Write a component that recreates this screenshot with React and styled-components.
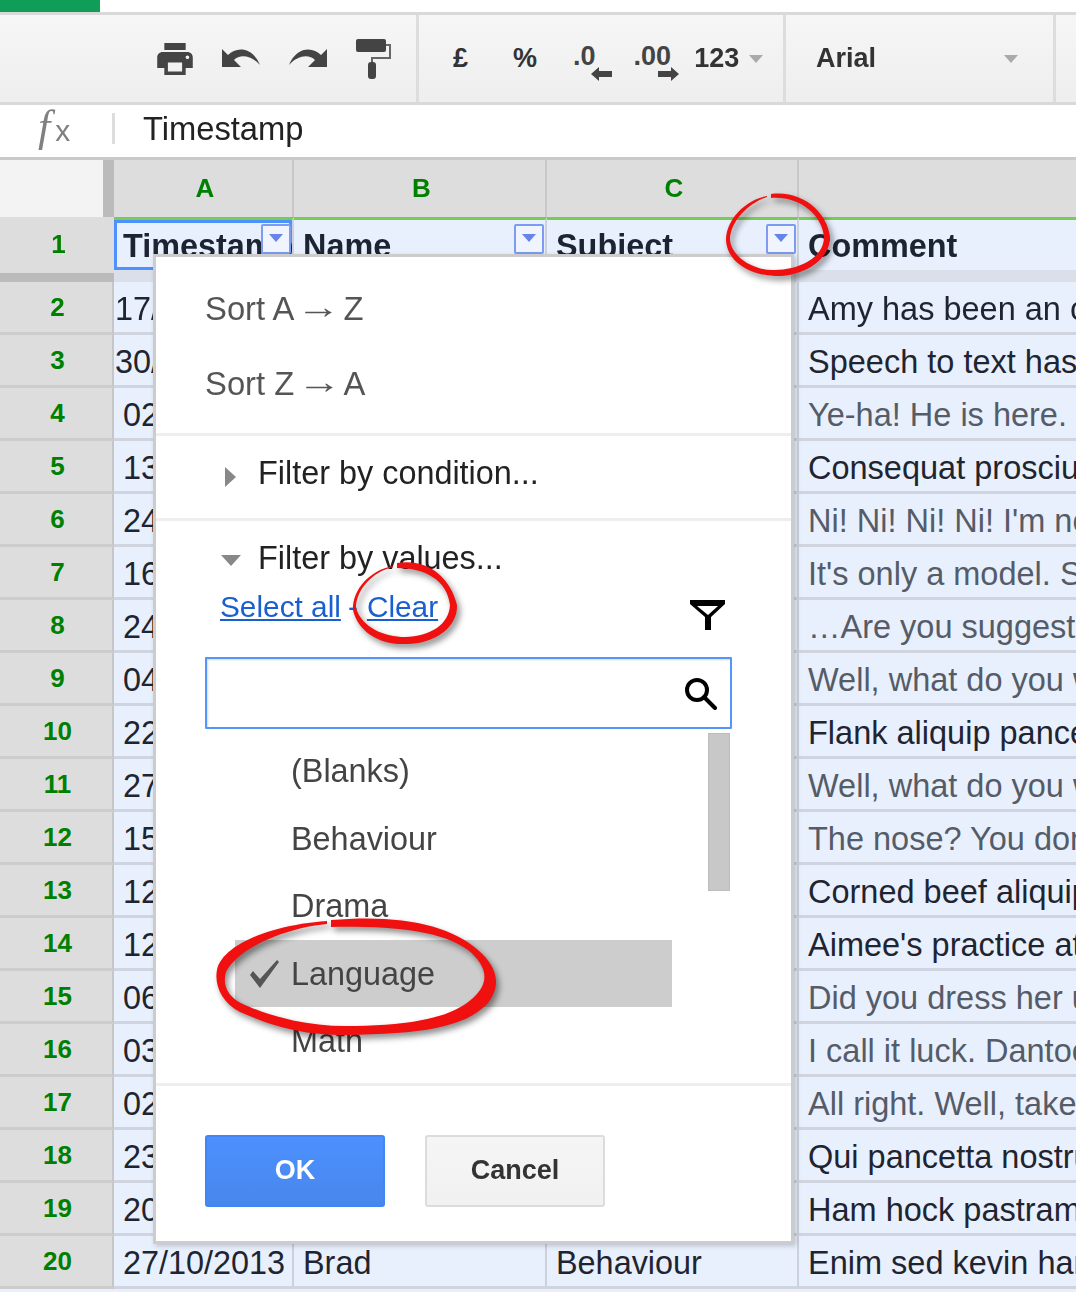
import styled, { createGlobalStyle } from "styled-components";

const rows = [
    { n: 2, date: "17/", inset: true, comment: "Amy has been an o" },
    { n: 3, date: "30/", inset: true, comment: "Speech to text has" },
    { n: 4, date: "02", comment: "Ye-ha! He is here.", muted: true },
    { n: 5, date: "13", comment: "Consequat prosciutto" },
    { n: 6, date: "24", comment: "Ni! Ni! Ni! Ni! I'm no", muted: true },
    { n: 7, date: "16", comment: "It's only a model. S", muted: true },
    { n: 8, date: "24", comment: "…Are you suggest", muted: true },
    { n: 9, date: "04", comment: "Well, what do you w", muted: true },
    { n: 10, date: "22", comment: "Flank aliquip pance" },
    { n: 11, date: "27", comment: "Well, what do you w", muted: true },
    { n: 12, date: "15", comment: "The nose? You don", muted: true },
    { n: 13, date: "12", comment: "Corned beef aliquip" },
    { n: 14, date: "12", comment: "Aimee's practice at" },
    { n: 15, date: "06", comment: "Did you dress her u", muted: true },
    { n: 16, date: "03", comment: "I call it luck. Dantoc", muted: true },
    { n: 17, date: "02", comment: "All right. Well, take", muted: true },
    { n: 18, date: "23", comment: "Qui pancetta nostru" },
    { n: 19, date: "20", comment: "Ham hock pastram" },
    { n: 20, date: "27/10/2013", name: "Brad", subject: "Behaviour", comment: "Enim sed kevin ham" },
];

const values = ["(Blanks)", "Behaviour", "Drama", "Language", "Math"];

export default function App() {
    return (
        <Page>
            <GlobalStyle />
            <TopStrip><Progress /></TopStrip>
            <Toolbar>
                <ToolGroup $width={416} $pad={157} $gap={29}>
                    <svg width="36" height="32" viewBox="2 3 20 18" fill="#444">
                        <path d="M19 8H5c-1.66 0-3 1.34-3 3v6h4v4h12v-4h4v-6c0-1.66-1.34-3-3-3zm-3 11H8v-5h8v5zm3-7c-.55 0-1-.45-1-1s.45-1 1-1 1 .45 1 1-.45 1-1 1zm-1-9H6v4h12V3z" />
                    </svg>
                    <ArrowIcon />
                    <ArrowIcon $flip />
                    <svg width="35" height="40" viewBox="0 0 35 40">
                        <rect width="30" height="13" rx="2" fill="#444" />
                        <path d="M30 6H34V19H16V25" fill="none" stroke="#666" strokeWidth="2" />
                        <rect x="12" y="23" width="8" height="17" rx="3" fill="#444" />
                    </svg>
                </ToolGroup>
                <ToolSep />
                <ToolGroup $width={364} $pad={34} $gap={0}>
                    <ToolText>£</ToolText>
                    <ToolText $left={45}>%</ToolText>
                    <Decimal $left={36} $shift={16}>
                        .0
                        <svg width="21" height="14" viewBox="0 0 21 14" fill="#444">
                            <path d="M0 7L8 0V4H21V10H8V14Z" />
                        </svg>
                    </Decimal>
                    <Decimal $left={38} $shift={8}>
                        .00
                        <svg width="21" height="14" viewBox="0 0 21 14" fill="#444">
                            <path d="M21 7L13 0V4H0V10H13V14Z" />
                        </svg>
                    </Decimal>
                    <ToolText $left={23}>123</ToolText>
                    <DropCaret $left={10} />
                </ToolGroup>
                <ToolSep />
                <ToolGroup $width={267} $pad={30} $gap={0}>
                    <ToolText>Arial</ToolText>
                    <DropCaret $left={128} />
                </ToolGroup>
                <ToolSep />
            </Toolbar>
            <FormulaBar>
                <Fx>f<small>x</small></Fx>
                <FormulaSep />
                Timestamp
            </FormulaBar>
            <ColumnHeads>
                <Corner />
                <ColumnHead>A</ColumnHead>
                <ColumnHead>B</ColumnHead>
                <ColumnHead>C</ColumnHead>
                <ColumnHead $last />
            </ColumnHeads>
            <FrozenRow>
                <FrozenNumber>1</FrozenNumber>
                <FrozenCell $selected>Timestamp<FilterButton /></FrozenCell>
                <FrozenCell>Name<FilterButton /></FrozenCell>
                <FrozenCell>Subject<FilterButton /></FrozenCell>
                <FrozenCell $last>Comment</FrozenCell>
            </FrozenRow>
            <SheetBody>
                {rows.map((r) => (
                    <Row key={r.n}>
                        <RowNumber>{r.n}</RowNumber>
                        <Cell $inset={r.inset}>{r.date}</Cell>
                        <Cell>{r.name}</Cell>
                        <Cell>{r.subject}</Cell>
                        <Cell $last $muted={r.muted}>{r.comment}</Cell>
                    </Row>
                ))}
            </SheetBody>

            <Popup>
                <SortSection>
                    <SortItem>Sort A <SortArrow>→</SortArrow> Z</SortItem>
                    <SortItem>Sort Z <SortArrow>→</SortArrow> A</SortItem>
                </SortSection>
                <ConditionRow>
                    <Caret />
                    Filter by condition...
                </ConditionRow>
                <ValuesSection>
                    <ValuesHead>
                        <Caret $open />
                        Filter by values...
                    </ValuesHead>
                    <ValuesBody>
                        <LinksRow>
                            <LinkText>Select all</LinkText>
                            <LinkDash>-</LinkDash>
                            <LinkText>Clear</LinkText>
                            <FunnelIcon width="35" height="30" viewBox="0 0 35 30">
                                <path fillRule="evenodd" d="M0 0H35V4L21 17V30H15V17L0 4ZM7 6H28L18 15Z" />
                            </FunnelIcon>
                        </LinksRow>
                        <SearchBox>
                            <svg width="33" height="33" viewBox="0 0 33 33" fill="none" stroke="#000" strokeWidth="4">
                                <circle cx="13" cy="13" r="10" />
                                <path d="M20 20L31 31" strokeLinecap="round" />
                            </svg>
                        </SearchBox>
                        <ListArea>
                            <ValueList>
                                {values.map((v) => (
                                    <ValueItem key={v} $checked={v === "Language"}>
                                        {v === "Language" && (
                                            <CheckIcon width="30" height="30" viewBox="0 0 30 30" fill="#555">
                                                <path d="M0 16L3 12L10 20L27 1L29 3L10 29Z" />
                                            </CheckIcon>
                                        )}
                                        {v}
                                    </ValueItem>
                                ))}
                            </ValueList>
                            <ScrollThumb />
                        </ListArea>
                    </ValuesBody>
                </ValuesSection>
                <PopupFooter>
                    <OkButton>OK</OkButton>
                    <CancelButton>Cancel</CancelButton>
                </PopupFooter>
            </Popup>

            <Annotations viewBox="0 0 1076 1292">
                <path d="M771 194C805 190 828 215 830 237C830 262 800 277 775 276C750 275 727 262 726 240C726 220 745 200 767 196L767 197C748 203 730 222 730 240C732 258 755 271 775 270C798 270 824 258 824 237C822 215 800 196 771 198Z" />
                <path d="M397 563C425 558 450 575 457 605C458 630 430 645 405 644C380 645 358 632 353 610C352 590 370 570 393 566L393 567C372 572 356 590 356 608C362 628 385 637 405 637C430 636 449 625 450 605C447 580 425 568 397 568Z" />
                <path d="M331 920C400 914 450 925 478 950C497 966 502 985 488 1003C465 1028 420 1034 345 1035C300 1035 270 1025 240 1012C222 1003 214 985 217 970C222 945 270 925 327 921L327 924C285 928 238 948 226 972C222 985 228 998 245 1005C275 1018 310 1026 345 1026C410 1026 455 1018 476 995C490 980 486 965 468 950C440 930 390 926 331 927Z" />
            </Annotations>
        </Page>
    );
}

function ArrowIcon({ $flip }) {
    return (
        <FlipSvg $flip={$flip} width="38" height="19" viewBox="0 0 38 19" fill="#444">
            <path d="M0 1L6 7C14 -1 30 -2 38 17C29 7 18 6 12 12L19 19H0Z" />
        </FlipSvg>
    );
}

const GlobalStyle = createGlobalStyle`
    html, body {
        margin: 0;
        padding: 0;
        background: #ffffff;
    }
    * {
        box-sizing: border-box;
    }
`;

const Page = styled.div`
    position: relative;
    width: 1076px;
    height: 1292px;
    overflow: hidden;
    display: flex;
    flex-direction: column;
    font-family: "Liberation Sans", Arial, sans-serif;
    font-size: 32.4px;
    color: #1f2530;
    filter: blur(0.4px);
`;

const TopStrip = styled.div`
    height: 15px;
    flex: none;
    border-bottom: 3px solid #d9d9d9;
    background: #ffffff;
`;

const Progress = styled.div`
    width: 100px;
    height: 12px;
    background: #0f9d58;
`;

const Toolbar = styled.div`
    height: 90px;
    flex: none;
    display: flex;
    border-bottom: 3px solid #d9d9d9;
    background: linear-gradient(#f6f6f6, #eeeeee);
    color: #333333;
`;

const ToolGroup = styled.div`
    width: ${(p) => p.$width}px;
    padding-left: ${(p) => p.$pad}px;
    display: flex;
    flex: none;
    align-items: center;
    gap: ${(p) => p.$gap}px;
`;

const ToolSep = styled.div`
    width: 3px;
    flex: none;
    background: #dddddd;
`;

const FlipSvg = styled.svg`
    margin-top: -2px;
    transform: ${(p) => (p.$flip ? "scaleX(-1)" : "none")};
`;

const ToolText = styled.span`
    margin-left: ${(p) => p.$left || 0}px;
    margin-top: -2px;
    font-size: 27px;
    font-weight: 700;
    line-height: 30px;
`;

const Decimal = styled.div`
    margin-left: ${(p) => p.$left}px;
    margin-top: 7px;
    height: 42px;
    display: flex;
    flex-direction: column;
    align-items: flex-end;
    font-size: 27px;
    font-weight: 700;
    line-height: 30px;
    color: #444444;

    svg {
        flex: none;
        margin-top: -4px;
        margin-right: -${(p) => p.$shift}px;
    }
`;

const DropCaret = styled.div`
    margin-left: ${(p) => p.$left}px;
    width: 0;
    height: 0;
    border-left: 7px solid transparent;
    border-right: 7px solid transparent;
    border-top: 8px solid #aaaaaa;
`;

const FormulaBar = styled.div`
    height: 55px;
    flex: none;
    display: flex;
    align-items: center;
    padding: 0 0 5px 38px;
    border-bottom: 3px solid #c9c9c9;
    background: #ffffff;
    color: #222222;
    font-size: 32.7px;
`;

const Fx = styled.span`
    width: 74px;
    font-family: "Liberation Serif", serif;
    font-style: italic;
    font-size: 44px;
    line-height: 40px;
    color: #808080;

    small {
        margin-left: 5px;
        font-family: "Liberation Sans", sans-serif;
        font-style: normal;
        font-size: 30px;
    }
`;

const FormulaSep = styled.div`
    width: 3px;
    height: 31px;
    margin-right: 28px;
    background: #dddddd;
`;

const ColumnHeads = styled.div`
    height: 57px;
    flex: none;
    display: grid;
    grid-template-columns: 114px 180px 253px 252px 1fr;
    background: #dddddd;
`;

const Corner = styled.div`
    background: #f3f3f3;
    border-right: 11px solid #bbbbbb;
`;

const ColumnHead = styled.div`
    display: flex;
    align-items: center;
    justify-content: center;
    padding: 0 0 1px 4px;
    border-right: ${(p) => (p.$last ? "none" : "2px solid #c8c8c8")};
    color: #008000;
    font-size: 26px;
    font-weight: 700;
`;

const FrozenRow = styled.div`
    height: 65px;
    flex: none;
    display: grid;
    grid-template-columns: 114px 180px 253px 252px 1fr;
`;

const FrozenNumber = styled.div`
    display: flex;
    align-items: center;
    justify-content: center;
    padding: 0 0 1px 3px;
    background: #dddddd;
    border-bottom: 9px solid #bbbbbb;
    color: #008000;
    font-size: 26px;
    font-weight: 700;
`;

const FrozenCell = styled.div`
    position: relative;
    padding: 4px 0 0 9px;
    overflow: hidden;
    white-space: nowrap;
    background: #e9f0fd;
    border-top: 3px solid #76cc54;
    border-bottom: 12px solid #dadfe9;
    border-right: ${(p) => (p.$last ? "none" : "2px solid #ccd1db")};
    box-shadow: ${(p) => (p.$selected ? "inset 0 0 0 3px #4d90fe" : "none")};
    font-weight: 700;
    line-height: 44px;
    color: #1c2333;
`;

const FilterButton = styled.div`
    position: absolute;
    top: 4px;
    right: 1px;
    width: 30px;
    height: 30px;
    border: 2px solid #7b9cf0;
    border-radius: 2px;
    background: #eff4fe;

    &::after {
        content: "";
        position: absolute;
        left: 6px;
        top: 8px;
        border-left: 7px solid transparent;
        border-right: 7px solid transparent;
        border-top: 8px solid #6684ea;
    }
`;

const SheetBody = styled.div`
    flex: 1;
    background: #e9f0fd;
`;

const Row = styled.div`
    height: 53px;
    display: grid;
    grid-template-columns: 114px 180px 253px 252px 1fr;
`;

const RowNumber = styled.div`
    display: flex;
    align-items: center;
    justify-content: center;
    padding-left: 3px;
    background: #dddddd;
    border-bottom: 3px solid #cccccc;
    border-right: 2px solid #c6c6c6;
    color: #008000;
    font-size: 26px;
    font-weight: 700;
`;

const Cell = styled.div`
    padding-left: ${(p) => (p.$inset ? 1 : 9)}px;
    padding-top: 3px;
    overflow: hidden;
    white-space: nowrap;
    background: #e9f0fd;
    border-bottom: 3px solid #cfd4de;
    border-right: ${(p) => (p.$last ? "none" : "2px solid #ccd1db")};
    color: ${(p) => (p.$muted ? "#555c68" : "#1f2530")};
    font-size: ${(p) => (p.$last ? 32.5 : 32.4)}px;
    line-height: 48px;
`;

const Popup = styled.div`
    position: absolute;
    left: 153px;
    top: 254px;
    width: 641px;
    height: 990px;
    display: flex;
    flex-direction: column;
    background: #ffffff;
    border: 3px solid #cccccc;
    box-shadow: 2px 2px 5px rgba(0, 0, 0, 0.2);
    color: #222222;
`;

const SortSection = styled.div`
    padding: 14px 0 12px 49px;
    border-bottom: 3px solid #eeeeee;
`;

const SortItem = styled.div`
    height: 75px;
    line-height: 75px;
    white-space: pre;
    font-size: 32.8px;
    color: #555555;
`;

const SortArrow = styled.span`
    display: inline-block;
    transform: translateY(-2px) scaleX(1.35);
`;

const ConditionRow = styled.div`
    height: 85px;
    display: flex;
    align-items: center;
    gap: 22px;
    padding: 0 0 7px 69px;
    border-bottom: 3px solid #eeeeee;
`;

const Caret = styled.div`
    width: 0;
    height: 0;
    margin-top: ${(p) => (p.$open ? 4 : 6)}px;
    margin-left: ${(p) => (p.$open ? -4 : 0)}px;
    border-style: solid;
    border-color: transparent;
    border-width: ${(p) => (p.$open ? "11px 10px 0 10px" : "10px 0 10px 11px")};
    border-top-color: ${(p) => (p.$open ? "#888888" : "transparent")};
    border-left-color: ${(p) => (p.$open ? "transparent" : "#888888")};
`;

const ValuesSection = styled.div`
    flex: none;
    border-bottom: 3px solid #eeeeee;
`;

const ValuesHead = styled.div`
    height: 70px;
    display: flex;
    align-items: center;
    gap: 17px;
    padding: 4px 0 0 69px;
`;

const ValuesBody = styled.div`
    padding: 0 59px 0 49px;
`;

const LinksRow = styled.div`
    height: 66px;
    display: flex;
    align-items: flex-start;
    padding-left: 15px;
    line-height: 32px;
    font-size: 29.8px;
`;

const LinkText = styled.span`
    color: #1a5fd0;
    text-decoration: underline;
`;

const LinkDash = styled.span`
    margin: 0 17px 0 7px;
    width: 2px;
    color: #1a5fd0;
`;

const FunnelIcon = styled.svg`
    margin: 9px 7px 0 auto;
`;

const SearchBox = styled.div`
    height: 72px;
    display: flex;
    align-items: center;
    justify-content: flex-end;
    padding-right: 13px;
    border: 2.5px solid #5594fb;
    border-radius: 1px;
    box-shadow: inset 1px 1px 2px rgba(0, 0, 0, 0.15);
`;

const ListArea = styled.div`
    height: 354px;
    display: flex;
    align-items: flex-start;
`;

const ValueList = styled.div`
    width: 437px;
    margin: 8px 0 0 30px;
    flex: none;
`;

const ValueItem = styled.div`
    height: 67.5px;
    display: flex;
    align-items: center;
    padding-top: 2px;
    padding-left: ${(p) => (p.$checked ? 15 : 56)}px;
    background: ${(p) => (p.$checked ? "#cdcdcd" : "transparent")};
    color: #444444;
`;

const CheckIcon = styled.svg`
    margin-right: 11px;
`;

const ScrollThumb = styled.div`
    width: 22px;
    height: 158px;
    margin: 4px 0 0 36px;
    background: #c8c8c8;
    border: 1px solid #bdbdbd;
`;

const PopupFooter = styled.div`
    display: flex;
    gap: 40px;
    padding: 49px 0 0 49px;
`;

const OkButton = styled.div`
    width: 180px;
    height: 72px;
    display: flex;
    align-items: center;
    justify-content: center;
    padding-bottom: 2px;
    border: 2px solid #4285f4;
    border-radius: 3px;
    background: linear-gradient(#4d90fe, #4787ed);
    color: #ffffff;
    font-size: 27px;
    font-weight: 700;
`;

const CancelButton = styled(OkButton)`
    border-color: #dcdcdc;
    background: linear-gradient(#f5f5f5, #f1f1f1);
    color: #333333;
`;

const Annotations = styled.svg`
    position: absolute;
    left: 0;
    top: 0;
    width: 1076px;
    height: 1292px;
    pointer-events: none;
    fill: #f01010;
    filter: drop-shadow(3px 4px 3px rgba(0, 0, 0, 0.45));
`;
